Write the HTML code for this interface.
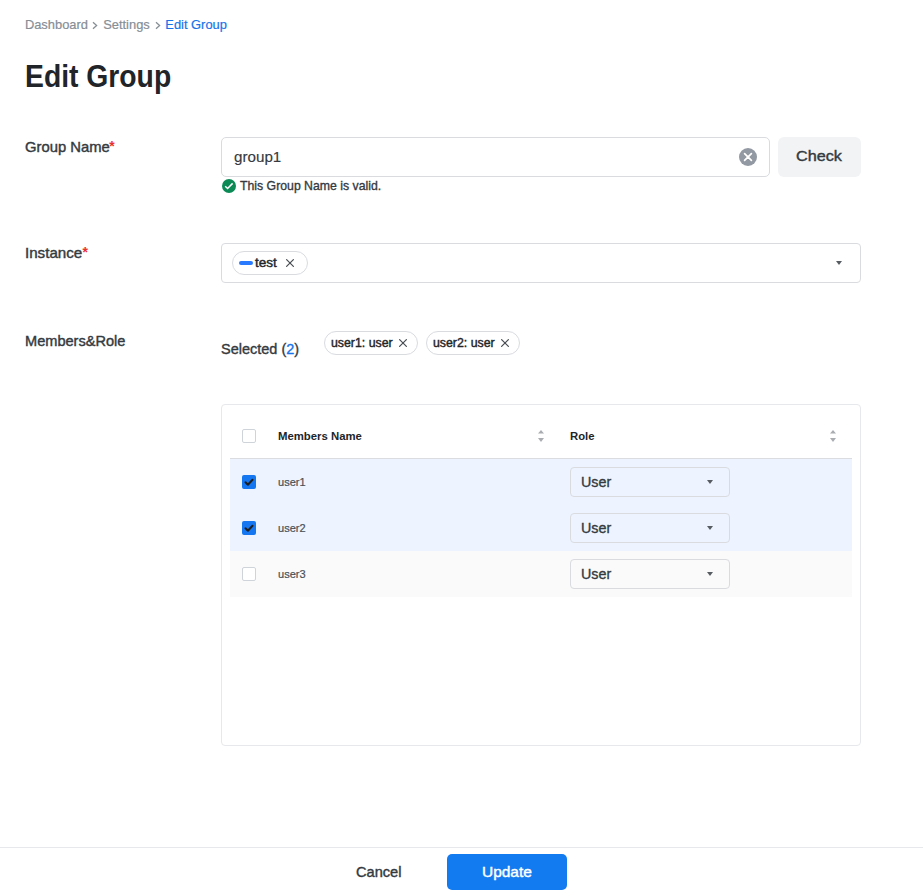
<!DOCTYPE html>
<html>
<head>
<meta charset="utf-8">
<style>
html,body{margin:0;padding:0;background:#fff;width:923px;height:895px;overflow:hidden;position:relative}
body{font-family:"Liberation Sans",sans-serif;}
.t{position:absolute;white-space:nowrap;line-height:1;transform-origin:0 0;font-family:"Liberation Sans",sans-serif}
.b{position:absolute;box-sizing:border-box}
.svg{position:absolute;overflow:visible}
.sb{-webkit-text-stroke:0.4px currentColor}
</style>
</head>
<body>
<!-- breadcrumb -->
<div class="t" style="left:24.9px;top:19.1px;font-size:12.9px;color:#868e96;-webkit-text-stroke:0.2px currentColor">Dashboard</div>
<svg class="svg" style="left:92px;top:21px" width="7" height="9" viewBox="0 0 7 9"><path d="M1 1.3 L4.6 4.5 L1 7.7" fill="none" stroke="#868e96" stroke-width="1.3"/></svg>
<div class="t" style="left:103.2px;top:19.1px;font-size:12.9px;color:#868e96;-webkit-text-stroke:0.2px currentColor">Settings</div>
<svg class="svg" style="left:155px;top:21px" width="7" height="9" viewBox="0 0 7 9"><path d="M1 1.3 L4.6 4.5 L1 7.7" fill="none" stroke="#868e96" stroke-width="1.3"/></svg>
<div class="t" style="left:165.3px;top:19.1px;font-size:12.9px;color:#1673ea;-webkit-text-stroke:0.2px currentColor">Edit Group</div>

<!-- title -->
<div class="t" style="left:24.9px;top:61.2px;font-size:30.6px;font-weight:700;color:#212529;transform:scaleX(0.925)">Edit Group</div>

<!-- Group name -->
<div class="t sb" style="left:24.65px;top:141.1px;font-size:13.9px;color:#343a40;transform:scaleX(1.065)">Group Name</div>
<div class="t" style="left:109.3px;top:140.1px;font-size:13.9px;font-weight:700;color:#e8322f">*</div>
<div class="b" style="left:221px;top:137px;width:549px;height:40px;border:1px solid #d9dbdf;border-radius:5px"></div>
<div class="t" style="left:234.1px;top:149.5px;font-size:14.75px;color:#343a40;transform:scaleX(1.03);-webkit-text-stroke:0.15px currentColor">group1</div>
<svg class="svg" style="left:739px;top:148px" width="18" height="18" viewBox="0 0 18 18"><circle cx="9" cy="9" r="9" fill="#9299a2"/><path d="M5.6 5.6 L12.4 12.4 M12.4 5.6 L5.6 12.4" stroke="#fff" stroke-width="1.7" stroke-linecap="round"/></svg>
<div class="b" style="left:778px;top:137px;width:83px;height:40px;background:#f1f3f5;border-radius:6px"></div>
<div class="t sb" style="left:796.4px;top:148.6px;font-size:14.8px;color:#343a40;transform:scaleX(1.095)">Check</div>
<svg class="svg" style="left:222px;top:179px" width="14" height="14" viewBox="0 0 14 14"><circle cx="7" cy="7" r="7" fill="#0b8a56"/><path d="M3.2 7.2 L5.6 9.5 L10.6 4.4" fill="none" stroke="#fff" stroke-width="1.5"/></svg>
<div class="t" style="left:239.8px;top:180.1px;font-size:12.9px;color:#343a40;transform:scaleX(0.952);-webkit-text-stroke:0.35px #343a40">This Group Name is valid.</div>

<!-- Instance -->
<div class="t sb" style="left:24.6px;top:246.9px;font-size:13.9px;color:#343a40;transform:scaleX(1.089)">Instance</div>
<div class="t" style="left:82.6px;top:245.9px;font-size:13.9px;font-weight:700;color:#e8322f">*</div>
<div class="b" style="left:221px;top:243px;width:640px;height:40px;border:1px solid #d9dbdf;border-radius:4px"></div>
<div class="b" style="left:232px;top:251px;width:76px;height:24px;border:1px solid #d9dbdf;border-radius:12px"></div>
<div class="b" style="left:239px;top:261px;width:14px;height:4px;background:#2a7aff;border-radius:2px"></div>
<div class="t sb" style="left:255.1px;top:256.7px;font-size:12px;color:#212529;transform:scaleX(1.13)">test</div>
<svg class="svg" style="left:284.5px;top:257.5px" width="10" height="10" viewBox="0 0 10 10"><path d="M1.6 1.6 L8.4 8.4 M8.4 1.6 L1.6 8.4" stroke="#4a4f55" stroke-width="1.25" stroke-linecap="round"/></svg>
<svg class="svg" style="left:836px;top:261px" width="6" height="4" viewBox="0 0 6 4"><path d="M0 0 H6 L3.4 3.6 Q3 4 2.6 3.6 Z" fill="#575c62"/></svg>

<!-- Members & Role -->
<div class="t sb" style="left:25.1px;top:335.1px;font-size:13.9px;color:#343a40;transform:scaleX(1.049)">Members&amp;Role</div>
<div class="t" style="left:221.2px;top:343.1px;font-size:13.8px;color:#343a40;transform:scaleX(1.05);-webkit-text-stroke:0.35px currentColor">Selected (<span style="color:#1673ea">2</span>)</div>
<div class="b" style="left:324px;top:331px;width:94px;height:24px;border:1px solid #d9dbdf;border-radius:12px"></div>
<div class="t sb" style="left:331px;top:337px;font-size:12px;color:#212529;transform:scaleX(1.027);-webkit-text-stroke:0.4px #212529">user1: user</div>
<svg class="svg" style="left:397.5px;top:337.5px" width="10" height="10" viewBox="0 0 10 10"><path d="M1.6 1.6 L8.4 8.4 M8.4 1.6 L1.6 8.4" stroke="#4a4f55" stroke-width="1.25" stroke-linecap="round"/></svg>
<div class="b" style="left:426px;top:331px;width:94px;height:24px;border:1px solid #d9dbdf;border-radius:12px"></div>
<div class="t sb" style="left:433.2px;top:337px;font-size:12px;color:#212529;transform:scaleX(1.027);-webkit-text-stroke:0.4px #212529">user2: user</div>
<svg class="svg" style="left:499.5px;top:337.5px" width="10" height="10" viewBox="0 0 10 10"><path d="M1.6 1.6 L8.4 8.4 M8.4 1.6 L1.6 8.4" stroke="#4a4f55" stroke-width="1.25" stroke-linecap="round"/></svg>

<!-- table card -->
<div class="b" style="left:221px;top:404px;width:640px;height:342px;border:1px solid #e7e8eb;border-radius:4px"></div>
<div class="b" style="left:242px;top:429px;width:14px;height:14px;border:1px solid #ced4da;border-radius:2px;background:#fff"></div>
<div class="t" style="left:278.2px;top:431.2px;font-size:11.06px;font-weight:700;color:#212529;transform:scaleX(1.027)">Members Name</div>
<svg class="svg" style="left:538px;top:430px" width="6" height="12" viewBox="0 0 6 12"><path d="M0 3.6 L3 0 L6 3.6 Z M0 8 L6 8 L3 12 Z" fill="#a9acb0"/></svg>
<div class="t" style="left:569.8px;top:431.2px;font-size:11.06px;font-weight:700;color:#212529;transform:scaleX(1.022)">Role</div>
<svg class="svg" style="left:830px;top:430px" width="6" height="12" viewBox="0 0 6 12"><path d="M0 3.6 L3 0 L6 3.6 Z M0 8 L6 8 L3 12 Z" fill="#a9acb0"/></svg>
<div class="b" style="left:230px;top:458px;width:622px;height:1px;background:#dadcdf"></div>
<div class="b" style="left:230px;top:459px;width:622px;height:92px;background:#edf4ff"></div>
<div class="b" style="left:230px;top:551px;width:622px;height:46px;background:#fafafa"></div>

<!-- rows -->
<div class="b" style="left:242px;top:475px;width:14px;height:14px;border-radius:2px;background:#1476f0"></div>
<svg class="svg" style="left:242px;top:475px" width="14" height="14" viewBox="0 0 14 14"><path d="M3.5 7.2 L5.9 9.7 L10.5 4.7" fill="none" stroke="#1f1f1f" stroke-width="2" stroke-linecap="round" stroke-linejoin="round"/></svg>
<div class="t" style="left:278px;top:476.9px;font-size:11.06px;color:#495057;-webkit-text-stroke:0.2px currentColor">user1</div>
<div class="b" style="left:570px;top:467px;width:160px;height:30px;border:1px solid #d9dbdf;border-radius:4px"></div>
<div class="t" style="left:581.4px;top:474.5px;font-size:14.75px;color:#343a40;transform:scaleX(0.97);-webkit-text-stroke:0.35px currentColor">User</div>
<svg class="svg" style="left:707px;top:480px" width="6" height="4" viewBox="0 0 6 4"><path d="M0 0 H6 L3.4 3.6 Q3 4 2.6 3.6 Z" fill="#575c62"/></svg>

<div class="b" style="left:242px;top:521px;width:14px;height:14px;border-radius:2px;background:#1476f0"></div>
<svg class="svg" style="left:242px;top:521px" width="14" height="14" viewBox="0 0 14 14"><path d="M3.5 7.2 L5.9 9.7 L10.5 4.7" fill="none" stroke="#1f1f1f" stroke-width="2" stroke-linecap="round" stroke-linejoin="round"/></svg>
<div class="t" style="left:278px;top:522.9px;font-size:11.06px;color:#495057;-webkit-text-stroke:0.2px currentColor">user2</div>
<div class="b" style="left:570px;top:513px;width:160px;height:30px;border:1px solid #d9dbdf;border-radius:4px"></div>
<div class="t" style="left:581.4px;top:520.5px;font-size:14.75px;color:#343a40;transform:scaleX(0.97);-webkit-text-stroke:0.35px currentColor">User</div>
<svg class="svg" style="left:707px;top:526px" width="6" height="4" viewBox="0 0 6 4"><path d="M0 0 H6 L3.4 3.6 Q3 4 2.6 3.6 Z" fill="#575c62"/></svg>

<div class="b" style="left:242px;top:567px;width:14px;height:14px;border:1px solid #ced4da;border-radius:2px;background:#fff"></div>
<div class="t" style="left:278px;top:568.9px;font-size:11.06px;color:#495057;-webkit-text-stroke:0.2px currentColor">user3</div>
<div class="b" style="left:570px;top:559px;width:160px;height:30px;border:1px solid #d9dbdf;border-radius:4px"></div>
<div class="t" style="left:581.4px;top:566.5px;font-size:14.75px;color:#343a40;transform:scaleX(0.97);-webkit-text-stroke:0.35px currentColor">User</div>
<svg class="svg" style="left:707px;top:572px" width="6" height="4" viewBox="0 0 6 4"><path d="M0 0 H6 L3.4 3.6 Q3 4 2.6 3.6 Z" fill="#575c62"/></svg>

<!-- footer -->
<div class="b" style="left:0;top:847px;width:923px;height:1px;background:#e7e8eb"></div>
<div class="t sb" style="left:356.2px;top:864.5px;font-size:14.8px;color:#343a40;transform:scaleX(0.986)">Cancel</div>
<div class="b" style="left:447px;top:854px;width:120px;height:36px;background:#137bf0;border-radius:5px"></div>
<div class="t sb" style="left:481.9px;top:864.5px;font-size:14.8px;color:#fff;transform:scaleX(1.045)">Update</div>
</body>
</html>
